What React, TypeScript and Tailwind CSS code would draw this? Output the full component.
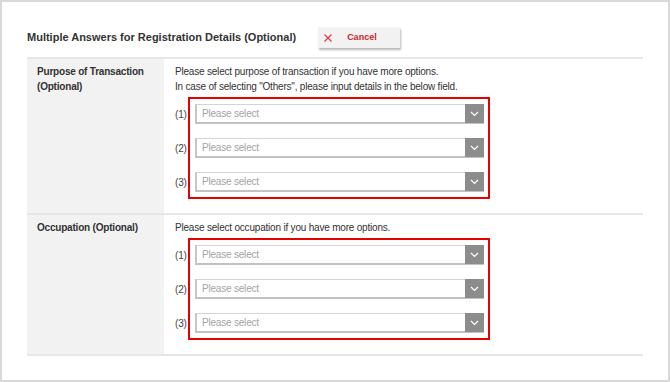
import React from 'react';

const font = { fontFamily: '"Liberation Sans", Arial, sans-serif' };

const SelectBox: React.FC = () => (
  <div className="flex h-[20px] bg-white border border-[#d4d4d4] border-l-2 border-l-[#c6c6c6] border-b-2 border-b-[#c2c2c2]">
    <div className="flex-1 flex items-center pl-[5px] text-[10px] tracking-[-0.2px] text-[#a3a3a3]">Please select</div>
    <div className="w-[19px] -my-px -mr-px flex items-center justify-center bg-[#8c8c8c]">
      <svg width="9" height="6" viewBox="0 0 9 6" fill="none">
        <path d="M1 1 L4.5 4.5 L8 1" stroke="#ffffff" strokeWidth="1.2" />
      </svg>
    </div>
  </div>
);

const SelectGroup: React.FC = () => (
  <div className="flex mt-[3px]">
    <div className="w-[13px] flex flex-col gap-[14px] pt-[7px] text-[10px] tracking-[-0.2px] text-[#444]">
      {['(1)', '(2)', '(3)'].map((n) => (
        <div key={n} className="h-[20px] flex items-center">{n}</div>
      ))}
    </div>
    <div className="w-[302px] border-2 border-[#e60000] p-[5px] pr-[4px] flex flex-col gap-[14px]">
      <SelectBox />
      <SelectBox />
      <SelectBox />
    </div>
  </div>
);

const Row: React.FC<{ label: React.ReactNode; lines: string[] }> = ({ label, lines }) => (
  <div className="flex border-b-2 border-[#e6e6e6]">
    <div className="w-[137px] shrink-0 bg-[#f2f2f2] pl-[10px] pr-[10px] pt-[5px] text-[10px] leading-[15px] tracking-[-0.2px] font-bold text-[#333]">
      {label}
    </div>
    <div className="flex-1 pl-[11px] pt-[5px] pb-[14px]">
      <div className="text-[10px] leading-[15px] tracking-[-0.2px] text-[#333]">
        {lines.map((l) => (
          <div key={l}>{l}</div>
        ))}
      </div>
      <SelectGroup />
    </div>
  </div>
);

export default function App() {
  return (
    <div className="w-[670px] h-[382px] border-2 border-[#d9d9d9] bg-white" style={font}>
      <div className="pl-[25px] pt-[25px] flex items-center">
        <h2 className="text-[11px] font-bold text-[#333]">Multiple Answers for Registration Details (Optional)</h2>
        <button className="ml-[22px] w-[82px] h-[21px] flex items-center pl-[6px] bg-[#f2f2f2] shadow-[1px_2px_2px_rgba(0,0,0,0.28)]">
          <svg width="8" height="8" viewBox="0 0 8 8" fill="none">
            <path d="M0.5 0.5 L7.5 7.5 M7.5 0.5 L0.5 7.5" stroke="#d9363e" strokeWidth="1.1" />
          </svg>
          <span className="ml-[15px] text-[9px] font-bold text-[#c9252c]">Cancel</span>
        </button>
      </div>

      <div className="mx-[25px] mt-[9px] border-t-2 border-[#e6e6e6]">
        <Row
          label={<>Purpose of Transaction<br />(Optional)</>}
          lines={[
            'Please select purpose of transaction if you have more options.',
            'In case of selecting "Others", please input details in the below field.',
          ]}
        />
        <Row label="Occupation (Optional)" lines={['Please select occupation if you have more options.']} />
      </div>
    </div>
  );
}
